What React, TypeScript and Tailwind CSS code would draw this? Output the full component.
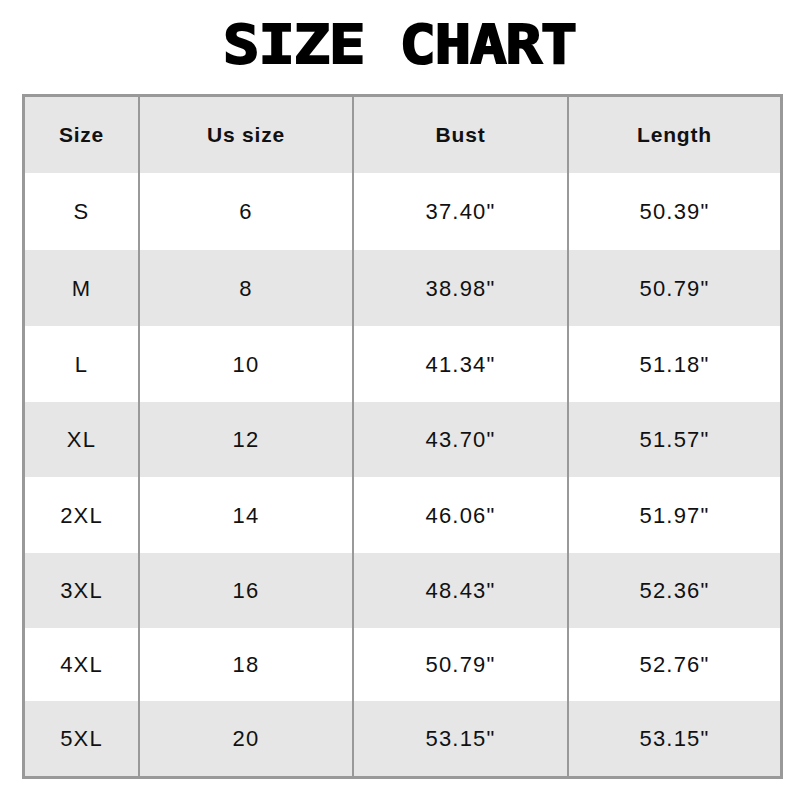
import React from "react";

const rows = [
  { size: "S", us: "6", bust: '37.40"', length: '50.39"', h: "h-[77px]" },
  { size: "M", us: "8", bust: '38.98"', length: '50.79"', h: "h-[76px]" },
  { size: "L", us: "10", bust: '41.34"', length: '51.18"', h: "h-[76px]" },
  { size: "XL", us: "12", bust: '43.70"', length: '51.57"', h: "h-[75px]" },
  { size: "2XL", us: "14", bust: '46.06"', length: '51.97"', h: "h-[76px]" },
  { size: "3XL", us: "16", bust: '48.43"', length: '52.36"', h: "h-[75px]" },
  { size: "4XL", us: "18", bust: '50.79"', length: '52.76"', h: "h-[73px]" },
  { size: "5XL", us: "20", bust: '53.15"', length: '53.15"', h: "h-[75px]" },
];

const Row = ({
  cells,
  height,
  shaded,
  head,
}: {
  cells: string[];
  height: string;
  shaded: boolean;
  head?: boolean;
}) => {
  const widths = ["w-[113px]", "w-[214px]", "w-[215px]", "w-[213px]"];
  return (
    <div
      className={`flex flex-row ${height} ${
        shaded ? "bg-[#e6e6e6]" : "bg-white"
      }`}
    >
      {cells.map((c, i) => (
        <div
          key={i}
          className={`flex items-center justify-center ${widths[i]} ${
            i > 0 ? "border-l-2 border-[#999999]" : ""
          } ${
            head
              ? "text-[21px] font-bold tracking-[0.8px]"
              : "text-[22px] tracking-[1.2px]"
          }`}
        >
          {c}
        </div>
      ))}
    </div>
  );
};

export default function App() {
  return (
    <div className="w-[800px] h-[800px] bg-white text-[#111] font-['Liberation_Sans',Arial,sans-serif]">
      <div className="h-[94px] flex items-center justify-center pb-1">
        <div className="inline-block scale-x-[1.12] font-['DejaVu_Sans_Mono',monospace] font-bold text-[54px] leading-none tracking-[-1px] text-black [-webkit-text-stroke:2px_black]">
          SIZE CHART
        </div>
      </div>
      <div className="ml-[22px] w-[761px] border-[3px] border-[#999999] flex flex-col">
        <Row
          cells={["Size", "Us size", "Bust", "Length"]}
          height="h-[76px]"
          shaded={true}
          head
        />
        {rows.map((r, i) => (
          <Row
            key={r.size}
            cells={[r.size, r.us, r.bust, r.length]}
            height={r.h}
            shaded={i % 2 === 1}
          />
        ))}
      </div>
    </div>
  );
}
